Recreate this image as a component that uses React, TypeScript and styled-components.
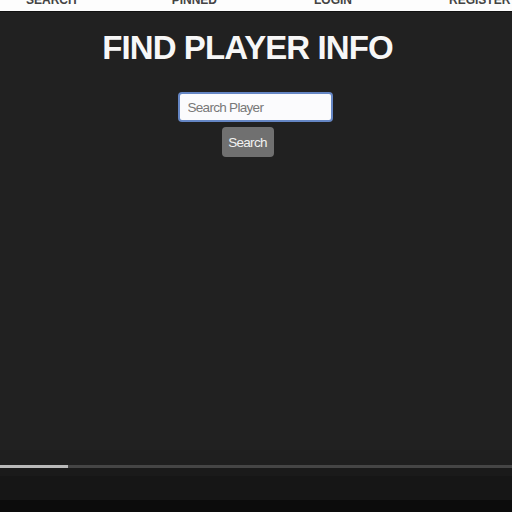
import React from "react";
import styled, { createGlobalStyle } from "styled-components";

const Global = createGlobalStyle`
  html, body { margin: 0; padding: 0; background: #212121; }
  body { width: 512px; height: 512px; overflow: hidden; font-family: "Liberation Sans", Arial, sans-serif; }
`;

const Page = styled.div`
  width: 512px;
  height: 512px;
  display: flex;
  flex-direction: column;
  background: #212121;
`;

const Nav = styled.nav`
  height: 12px;
  flex: none;
  background: #fdfdfd;
  overflow: hidden;
  display: flex;
  align-items: flex-end;
  border-bottom: 1px solid #111;
  box-sizing: border-box;
`;

const NavLink = styled.span<{ $x: number }>`
  position: relative;
  top: -5px;
  margin-left: ${(p) => p.$x}px;
  font-size: 12px;
  font-weight: bold;
  line-height: 12px;
  color: #444;
  white-space: nowrap;
`;

const Main = styled.main`
  flex: 1;
  display: flex;
  flex-direction: column;
  align-items: center;
  padding-top: 18px;
`;

const Title = styled.h1`
  margin: 0 17px 0 0;
  font-size: 33px;
  line-height: 36px;
  letter-spacing: -0.9px;
  font-weight: bold;
  color: #f7f7f7;
`;

const Input = styled.input`
  margin-top: 26px;
  margin-right: 2px;
  width: 155px;
  height: 30px;
  box-sizing: border-box;
  border: 2px solid #6586c4;
  border-radius: 4px;
  background: #fbfbfd;
  padding: 0 0 0 8px;
  font-family: "Liberation Sans", Arial, sans-serif;
  font-size: 13.5px;
  letter-spacing: -0.7px;
  color: #222;
  outline: none;
  &::placeholder { color: #787878; }
`;

const Button = styled.button`
  margin-top: 5px;
  margin-right: 17px;
  width: 52px;
  height: 30px;
  border: none;
  border-radius: 4px;
  background: #707070;
  color: #f2f2f2;
  font-family: "Liberation Sans", Arial, sans-serif;
  font-size: 13.5px;
  letter-spacing: -0.7px;
  padding: 0;
`;

const Controls = styled.div`
  flex: none;
  height: 62px;
  display: flex;
  flex-direction: column;
`;

const Spacer = styled.div<{ $h: number; $bg: string }>`
  height: ${(p) => p.$h}px;
  background: ${(p) => p.$bg};
`;

const Track = styled.div`
  height: 3px;
  background: #454545;
  display: flex;
`;

const Played = styled.div`
  background: #b9b9b9;
`;

export default function App() {
  const progress = 68;
  return (
    <Page>
      <Global />
      <Nav>
        <NavLink $x={26}>SEARCH</NavLink>
        <NavLink $x={95}>PINNED</NavLink>
        <NavLink $x={97}>LOGIN</NavLink>
        <NavLink $x={97}>REGISTER</NavLink>
      </Nav>
      <Main>
        <Title>FIND PLAYER INFO</Title>
        <Input placeholder="Search Player" />
        <Button>Search</Button>
      </Main>
      <Controls>
        <Spacer $h={15} $bg="#1f1f1f" />
        <Track>
          <Played style={{ width: progress }} />
        </Track>
        <Spacer $h={8} $bg="#1a1a1a" />
        <Spacer $h={24} $bg="#161616" />
        <Spacer $h={12} $bg="#0c0c0c" />
      </Controls>
    </Page>
  );
}
